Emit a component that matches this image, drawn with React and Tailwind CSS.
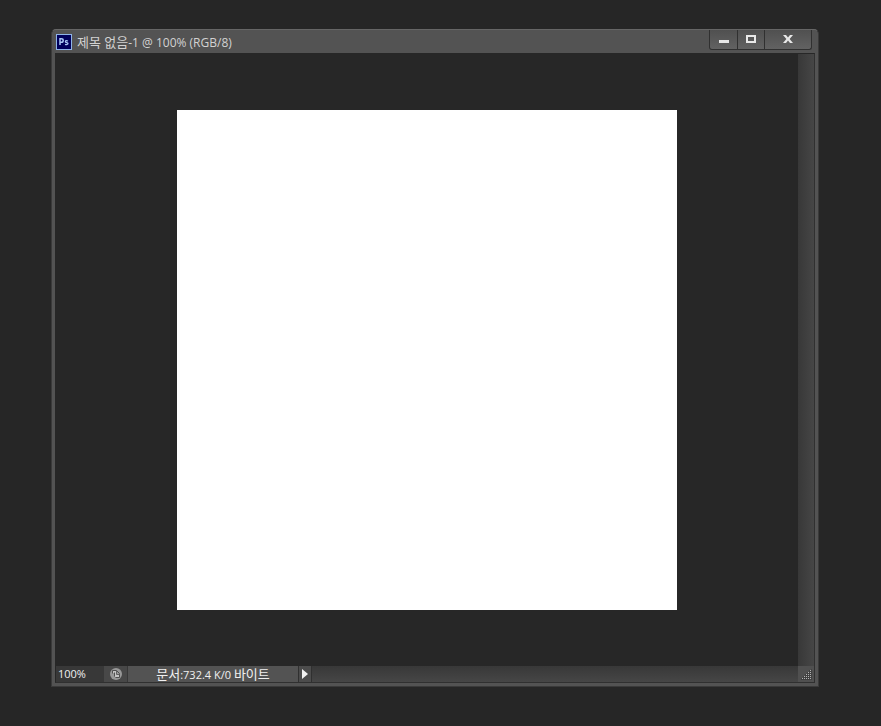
function PsIcon() {
  return (
    <svg viewBox="0 0 16 16" className="h-4 w-4 shrink-0" aria-hidden="true">
      <rect x="0.5" y="0.5" width="15" height="15" fill="#00005c" stroke="#8fb4e8" />
      <path d="M4 11V4.7H5.4Q7.2 4.7 7.2 6.4Q7.2 8.2 5.4 8.2H4" fill="none" stroke="#a9c8f5" strokeWidth="1.5" />
      <path d="M12 7Q9.4 6.2 9.4 7.4Q9.4 8.3 10.8 8.6Q12.2 9 12 9.8Q11.5 10.9 9 10.3" fill="none" stroke="#a9c8f5" strokeWidth="1.3" />
    </svg>
  );
}

function TitleBar() {
  return (
    <header className="flex items-start pl-px pr-[3px]">
      <div className="flex h-[23px] min-w-0 flex-1 items-center gap-[5px]">
        <PsIcon />
        <h1 className="truncate pt-[2px] text-[12px] leading-4 text-[#d2d2d2]">
          <span className="text-[13px]">제목 없음</span>-1 @ 100% (RGB/8)
        </h1>
      </div>
      <div className="flex h-5 shrink-0 divide-x divide-[#303030] rounded-b-[3px] border border-t-0 border-[#303030] bg-linear-to-b from-[#505050] to-[#626262]">
        <button type="button" aria-label="최소화" className="flex w-7 items-center justify-center">
          <svg viewBox="0 0 12 12" className="h-3 w-3" shapeRendering="crispEdges">
            <rect x="1" y="6" width="10" height="3" fill="#e8e8e8" />
          </svg>
        </button>
        <button type="button" aria-label="최대화" className="flex w-[27px] items-center justify-center">
          <svg viewBox="0 0 12 12" className="h-3 w-3" shapeRendering="crispEdges">
            <path d="M1 1H11V9H1ZM3 3V7H9V3Z" fill="#e8e8e8" fillRule="evenodd" />
          </svg>
        </button>
        <button type="button" aria-label="닫기" className="flex w-[46px] items-center justify-center">
          <svg viewBox="0 0 12 12" className="h-3 w-3">
            <path d="M1 1H4L6 3.4L8 1H11L7.6 5L11 9H8L6 6.6L4 9H1L4.4 5Z" fill="#e8e8e8" />
          </svg>
        </button>
      </div>
    </header>
  );
}

function ResizeGrip() {
  const dots = [];
  for (let row = 0; row < 5; row++) {
    for (let col = 4 - row; col < 5; col++) {
      dots.push(<rect key={`${row}-${col}`} x={4 + col * 2} y={4 + row * 2} width="1" height="1" fill="#b4b4b4" />);
    }
  }
  return (
    <svg viewBox="0 0 16 16" className="h-4 w-4 shrink-0 bg-[#505050]" shapeRendering="crispEdges" aria-hidden="true">
      <path d="M13 3H14V14H3V12H5V10H7V8H9V6H11V4H13Z" fill="#404040" />
      {dots}
    </svg>
  );
}

function StatusBar() {
  return (
    <footer className="flex h-4 text-[11px] leading-4 text-[#f0f0f0]">
      <input
        aria-label="확대/축소"
        defaultValue="100%"
        className="w-12 bg-[#383838] pl-[2px] outline-none"
      />
      <button type="button" aria-label="문서 정보" className="flex w-6 items-center justify-center border-r border-[#383838] bg-[#484848]">
        <svg viewBox="0 0 12 12" className="h-3 w-3">
          <circle cx="6" cy="6" r="6" fill="#989898" />
          <path d="M3 3H6V6H9V9H5V5H3Z" fill="#c4c4c4" />
          <path d="M2.5 5.5V2.5H6.5L9.5 5.5V9.5H5.5" fill="none" stroke="#505050" />
          <path d="M6.5 3V6.5H9.5" fill="none" stroke="#606060" />
          <path d="M4.5 4.5V8.5" fill="none" stroke="#505050" />
        </svg>
      </button>
      <p className="w-[170px] bg-[#535353] text-center">
        <span className="text-[13px]">문서</span>:732.4 K/0 <span className="text-[13px]">바이트</span>
      </p>
      <button type="button" aria-label="상태 표시 메뉴" className="flex w-[14px] items-center justify-center border-x border-[#303030] bg-[#4c4c4c]">
        <svg viewBox="0 0 6 10" className="h-[10px] w-[6px]">
          <path d="M0 0L6 5L0 10Z" fill="#f2f2f2" />
        </svg>
      </button>
      <div className="flex-1 bg-linear-to-b from-[#383838] to-[#464646]" />
      <ResizeGrip />
    </footer>
  );
}

export default function App() {
  return (
    <div className="min-h-screen bg-[#262626] pb-10 pl-[51px] pr-[62px] pt-[29px] font-['Open_Sans','Noto_Sans_CJK_KR',sans-serif]">
      <main className="rounded-t-[5px] border border-[#3a3a3a] border-t-[#666666] bg-[#535353] px-[3px] pb-[3px]">
        <TitleBar />
        <div className="border border-[#303030] border-l-[#272727] border-t-[#272727]">
          <div className="flex">
            <div className="flex min-w-0 flex-1 justify-center bg-[#272727] py-14">
              <div className="aspect-square w-[500px] bg-white" />
            </div>
            <div className="w-4 shrink-0 bg-linear-to-r from-[#383838] to-[#464646]" />
          </div>
          <StatusBar />
        </div>
      </main>
    </div>
  );
}
